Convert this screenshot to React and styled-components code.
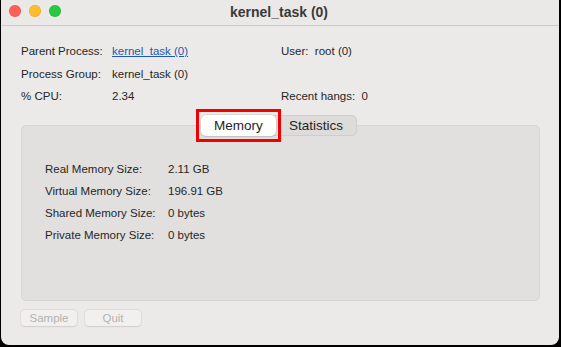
import React from 'react'
import styled, { createGlobalStyle } from 'styled-components'

const GlobalStyle = createGlobalStyle`
  html, body {
    margin: 0;
    padding: 0;
    background: #000;
  }
  body {
    font-family: 'Liberation Sans', Arial, sans-serif;
    -webkit-font-smoothing: antialiased;
  }
`

const Screen = styled.div`
  width: 561px;
  height: 347px;
  background: #000;
  overflow: hidden;
`

const Window = styled.div`
  width: 558px;
  height: 345px;
  margin-left: 1px;
  display: flex;
  flex-direction: column;
  background: #ebeae9;
  border-radius: 0 0 8px 8px;
  overflow: hidden;
`

const TitleBar = styled.div`
  height: 25px;
  flex-shrink: 0;
  display: flex;
  align-items: center;
  padding-left: 8px;
  border-bottom: 1px solid #cbcac9;
  background: #eae9e8;
`

const Lights = styled.div`
  display: flex;
  gap: 8px;
  margin-top: -3px;
`

const Light = styled.span`
  width: 12px;
  height: 12px;
  border-radius: 50%;
  background: ${(p) => p.color};
  box-shadow: inset 0 0 0 0.5px rgba(0, 0, 0, 0.12);
`

const Title = styled.div`
  flex: 1;
  text-align: center;
  margin-right: 60px;
  margin-left: -2px;
  margin-top: -2px;
  font-size: 14px;
  font-weight: bold;
  color: #3a3a3a;
`

const Content = styled.div`
  flex: 1;
  display: flex;
  flex-direction: column;
  padding: 14px 18px 0 20px;
`

const InfoGrid = styled.div`
  display: grid;
  grid-template-columns: 91px 169px 1fr;
  grid-auto-rows: 22.5px;
  align-items: center;
  font-size: 11.5px;
  color: #262626;
`

const Value = styled.span`
  color: #262626;
`

const Link = styled.a`
  color: #2257b5;
  text-decoration: underline;
  cursor: pointer;
`

const Pair = styled.span`
  white-space: pre;
`

const TabArea = styled.div`
  margin-top: 7px;
  display: flex;
  flex-direction: column;
`

const TabStrip = styled.div`
  display: flex;
  justify-content: center;
  margin-bottom: -11px;
  position: relative;
  z-index: 2;
  padding-right: 4px;
`

const Segments = styled.div`
  display: flex;
  align-items: center;
  height: 19px;
  background: #dddcdb;
  border: 1px solid #cfcecd;
  border-radius: 5px;
`

const Tab = styled.div`
  position: relative;
  height: ${(p) => (p.active ? '21px' : '19px')};
  width: ${(p) => p.width}px;
  display: flex;
  align-items: center;
  justify-content: center;
  font-size: 13.5px;
  color: #1f1f1f;
  background: ${(p) => (p.active ? '#ffffff' : 'transparent')};
  border-radius: 5px;
  box-shadow: ${(p) =>
    p.active ? '0 0 0 0.5px #c4c3c2, 0 1px 1px rgba(0,0,0,0.15)' : 'none'};
  margin-left: ${(p) => (p.active ? '-1px' : '0')};
`

const Highlight = styled.span`
  position: absolute;
  top: -6px;
  bottom: -6px;
  left: -5px;
  right: -5px;
  border: 3px solid #f00000;
  pointer-events: none;
`

const Panel = styled.div`
  height: 176px;
  box-sizing: border-box;
  margin-right: 1px;
  background: #e1e0df;
  border: 1px solid #d6d5d4;
  border-radius: 5px;
  padding: 32px 0 0 23px;
`

const MemGrid = styled.div`
  display: grid;
  grid-template-columns: 123px 1fr;
  grid-auto-rows: 22px;
  align-items: center;
  font-size: 11.5px;
  color: #262626;
`

const Buttons = styled.div`
  display: flex;
  gap: 8px;
  margin-top: 9px;
`

const Button = styled.button`
  width: ${(p) => p.width}px;
  height: 16px;
  padding: 0;
  font-family: inherit;
  font-size: 11.5px;
  color: #b3b2b1;
  background: #f1f0ef;
  border: none;
  border-radius: 4px;
  box-shadow: 0 0 0 0.5px #d2d1d0, 0 0.5px 1px rgba(0, 0, 0, 0.12);
`

const info = [
  ['Parent Process:', 'link', 'kernel_task (0)', 'User:  root (0)'],
  ['Process Group:', 'text', 'kernel_task (0)', ''],
  ['% CPU:', 'text', '2.34', 'Recent hangs:  0']
]

const memory = [
  ['Real Memory Size:', '2.11 GB'],
  ['Virtual Memory Size:', '196.91 GB'],
  ['Shared Memory Size:', '0 bytes'],
  ['Private Memory Size:', '0 bytes']
]

export default function App() {
  return (
    <>
      <GlobalStyle />
      <Screen>
        <Window>
          <TitleBar>
            <Lights>
              <Light color='#fe5f57' />
              <Light color='#febc2e' />
              <Light color='#28c840' />
            </Lights>
            <Title>kernel_task (0)</Title>
          </TitleBar>
          <Content>
            <InfoGrid>
              {info.map(([label, kind, value, right]) => (
                <React.Fragment key={label}>
                  <span>{label}</span>
                  {kind === 'link' ? <Link>{value}</Link> : <Value>{value}</Value>}
                  <Pair>{right}</Pair>
                </React.Fragment>
              ))}
            </InfoGrid>
            <TabArea>
              <TabStrip>
                <Segments>
                  <Tab active width={75}>
                    Memory
                    <Highlight />
                  </Tab>
                  <Tab width={80}>Statistics</Tab>
                </Segments>
              </TabStrip>
              <Panel>
                <MemGrid>
                  {memory.map(([label, value]) => (
                    <React.Fragment key={label}>
                      <span>{label}</span>
                      <span>{value}</span>
                    </React.Fragment>
                  ))}
                </MemGrid>
              </Panel>
            </TabArea>
            <Buttons>
              <Button width={56} disabled>
                Sample
              </Button>
              <Button width={56} disabled>
                Quit
              </Button>
            </Buttons>
          </Content>
        </Window>
      </Screen>
    </>
  )
}
